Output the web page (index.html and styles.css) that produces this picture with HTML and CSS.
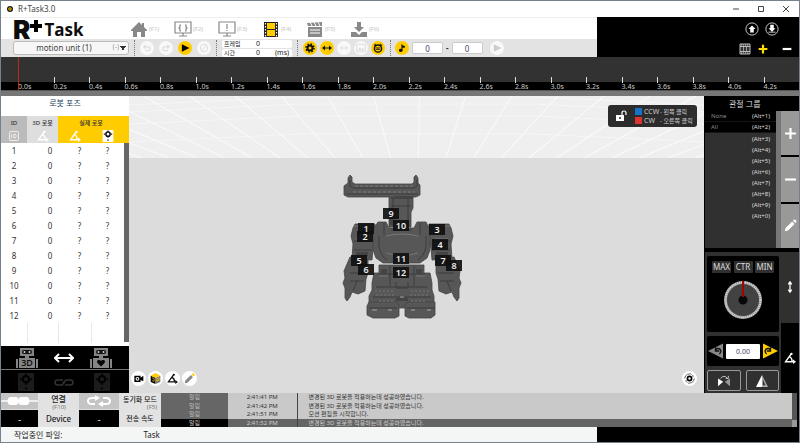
FILE: index.html
```html
<!DOCTYPE html>
<html lang="ko">
<head>
<meta charset="utf-8">
<title>R+Task3.0</title>
<link rel="stylesheet" href="styles.css">
</head>
<body>
<svg class="defs" aria-hidden="true">
  <symbol id="undo" viewBox="0 0 16 16"><path d="M3 6h7a3 3 0 0 1 0 6H5M6 3 3 6l3 3" fill="none" stroke="currentColor" stroke-width="2"/></symbol>
  <symbol id="angle" viewBox="0 0 16 16"><path d="M10 2 2 13h11M7 6q4 2 4 7" fill="none" stroke="currentColor" stroke-width="1.800"/><circle cx="10" cy="2.500" r="1.500" fill="currentColor"/><path d="m12 10 4 3-4 3z" fill="currentColor"/></symbol>
  <symbol id="both" viewBox="0 0 20 12"><path d="M0 6l6-5v4h8V1l6 5-6 5V7H6v4z" fill="currentColor"/></symbol>
  <symbol id="gear" viewBox="0 0 20 20"><circle cx="10" cy="10" r="5" fill="none" stroke="currentColor" stroke-width="4"/><circle cx="10" cy="10" r="8" fill="none" stroke="currentColor" stroke-width="3" stroke-dasharray="3.140"/></symbol>
  <symbol id="pencil" viewBox="0 0 16 16"><path d="m1 15 1-4 8-8 3 3-8 8z M11 2l1-1q1-1 2 0l1 1q1 1 0 2l-1 1z" fill="currentColor"/></symbol>
  <symbol id="motor" viewBox="0 0 18 20"><rect width="18" height="20" rx="1" fill="var(--plate)"/><circle cx="9" cy="7" r="3.500" fill="none" stroke="currentColor" stroke-width="2.500"/><path d="M8 1h2v2H8zM8 11h2v2H8zM2 6h2v2H2zM14 6h2v2h-2zM8 16h2v2H8z" fill="currentColor"/></symbol>
  <symbol id="bot" viewBox="0 0 22 20"><path d="M4 0h14v8H4zM9 8h4v3H9zM3 10h16v10H3zM0 11h2v9H0zM20 11h2v9h-2z" fill="#858585"/><rect x="6" y="2" width="10" height="4" rx="2" fill="#111"/><circle cx="8.500" cy="4" r="1" fill="#ccc"/><circle cx="13.500" cy="4" r="1" fill="#ccc"/></symbol>
</svg>
<div class="app">
  <header class="titlebar">
    <svg class="app-icon" viewBox="0 0 12 12"><circle cx="6" cy="6" r="6" fill="#171717"/><circle cx="6" cy="6" r="2.500" fill="none" stroke="#fc0" stroke-width="2"/></svg>
    <span>R+Task3.0</span>
    <div class="window-buttons">
      <button aria-label="최소화"><svg viewBox="0 0 8 8"><path d="M1 4h6"/></svg></button>
      <button aria-label="최대화"><svg viewBox="0 0 8 8"><path d="M1.500 1.500h5v5h-5z"/></svg></button>
      <button aria-label="닫기"><svg viewBox="0 0 8 8"><path d="m1 1 6 6M7 1 1 7"/></svg></button>
    </div>
  </header>

  <div class="top">
    <div class="top-main">
      <nav class="nav">
        <div class="logo"><span class="logo-r">R</span><svg viewBox="0 0 12 12"><path d="M4 0h4v4h4v4H8v4H4V8H0V4h4z"/></svg><span class="logo-task">Task</span></div>
        <button><svg viewBox="0 0 18 16"><path d="M9 1 1 9v1h2v6h4v-5h4v5h4v-6h2V9l-3-3V2h-2v2z" fill="#888"/></svg><span>(F1)</span></button>
        <button><svg viewBox="0 0 18 16"><path d="M1 1h16v11H1zM9 12v3M5 15h8M7 4H6v2L5 7l1 1v2h1M11 4h1v2l1 1-1 1v2h-1" fill="none" stroke="#888" stroke-width="1.200"/></svg><span>(F2)</span></button>
        <button><svg viewBox="0 0 18 16"><path d="M1 1h16v11H1zM9 12v3M5 15h8M9 3v5M9 9v1" fill="none" stroke="#888" stroke-width="1.200"/></svg><span>(F3)</span></button>
        <button><svg viewBox="0 0 18 16"><path d="M2 1h14v15H2z" fill="#222"/><path d="M5 2h8v6H5zM5 9h8v6H5z" fill="#fc0"/><path d="M3.500 2v14M14.500 2v14" stroke="#fff" stroke-width="1.200" stroke-dasharray="1.500"/></svg><span>(F4)</span></button>
        <button><svg viewBox="0 0 18 16"><path d="M2 6h14v10H2zM1 2l15-1v4H2z" fill="#888"/><path d="m4 1 2 4m2-4 2 4m2-4 2 4M4 9h10M4 12h10" stroke="#fff" fill="none"/></svg><span>(F5)</span></button>
        <button><svg viewBox="0 0 18 16"><path d="M7 1h4v5h3l-5 5-5-5h3zM1 11h5l3 3 3-3h5v5H1z" fill="#888"/></svg><span>(F6)</span></button>
      </nav>
      <div class="toolbar">
        <div class="unit-box"><select class="unit" aria-label="모션 유닛"><option>motion unit (1)</option></select><span>(-)</span></div>
        <i class="dots"></i>
        <div class="tools">
          <button class="round off" aria-label="실행 취소"><svg><use href="#undo"/></svg></button>
          <button class="round off" aria-label="다시 실행"><svg class="flip"><use href="#undo"/></svg></button>
          <button class="round" aria-label="재생"><svg viewBox="0 0 16 16"><path d="m3 2 12 6-12 6z" fill="#000"/></svg></button>
          <button class="round off" aria-label="정지"><svg viewBox="0 0 16 16"><circle cx="8" cy="8" r="6" fill="none" stroke="currentColor" stroke-width="1.500"/><path d="m4 12 8-8" stroke="currentColor" stroke-width="1.500"/></svg></button>
        </div>
        <i class="dots"></i>
        <dl class="frame"><div><dt>프레임</dt><dd>0</dd></div><div><dt>시간</dt><dd>0</dd><dd>(ms)</dd></div></dl>
        <i class="dots"></i>
        <div class="tools tight">
          <button class="round" aria-label="설정"><svg><use href="#gear"/></svg></button>
          <button class="round" aria-label="맞춤"><svg><use href="#both"/></svg></button>
          <button class="round off" aria-label="간격"><svg viewBox="0 0 20 12"><path d="M0 6h7M13 6h7M5 2l4 4-4 4M15 2l-4 4 4 4" fill="none" stroke="currentColor" stroke-width="2"/></svg></button>
          <button class="round off" aria-label="그림"><svg viewBox="0 0 16 16"><path d="M1 2h14v12H1z" fill="none" stroke="currentColor" stroke-width="1.500"/><path d="m2 12 4-5 3 3 2-2 3 4z" fill="currentColor"/></svg></button>
          <button class="round" aria-label="로봇"><svg viewBox="0 0 18 18"><circle cx="9" cy="10" r="6.500" fill="none" stroke="#111" stroke-width="2.500"/><path d="M5 8h8v4H5zM1 4l4-3v5zM17 4l-4-3v5z" fill="#111"/><path d="M6 10h2M10 10h2" stroke="#fc0" stroke-width="2"/></svg></button>
        </div>
        <i class="dots"></i>
        <div class="range">
          <button class="round" aria-label="음악"><svg viewBox="0 0 16 16"><path d="M7 1q1 3 6 4l-1 3-3-1v5a3 2.500 0 1 1-2-2.500z" fill="#111"/></svg></button>
          <input class="num" aria-label="시작" value="0"><b>-</b><input class="num" aria-label="끝" value="0">
          <button class="round off" aria-label="구간 재생"><svg viewBox="0 0 16 16"><path d="m3 2 12 6-12 6z" fill="#ccc"/></svg></button>
        </div>
      </div>
    </div>
    <div class="top-side">
      <div class="side-row">
        <button aria-label="올리기"><svg viewBox="0 0 16 16"><circle cx="8" cy="8" r="7" fill="none" stroke="#ddd"/><path d="m8 4 4 4h-2v4H6V8H4z" fill="#fff"/></svg></button>
        <button aria-label="내리기"><svg viewBox="0 0 16 16"><circle cx="8" cy="8" r="7" fill="none" stroke="#ddd"/><path d="M6 3h4v4h2l-4 4-4-4h2zM4 11h8v1H4z" fill="#fff"/></svg></button>
      </div>
      <div class="side-row second">
        <button aria-label="필름"><svg class="film" viewBox="0 0 12 12"><path d="M1 1h10v10H1z" fill="#333" stroke="#bbb"/><path d="M1 3.500h10M1 8.500h10" stroke="#bbb"/><path d="M2 2h8M2 10h8" stroke="#ccc" stroke-dasharray="1"/><path d="M4.500 4v4M7.500 4v4" stroke="#999"/></svg></button>
        <button aria-label="추가"><svg viewBox="0 0 16 16"><path d="M8 3v10M3 8h10" stroke="#fd0" stroke-width="2.500"/></svg></button>
        <button aria-label="삭제"><svg viewBox="0 0 16 16"><path d="M3 8h10" stroke="#fff" stroke-width="2.500"/></svg></button>
      </div>
    </div>
  </div>

  <div class="timeline"><ol class="ticks" id="ticks"></ol></div>

  <main class="main">
    <section class="pose">
      <h2>로봇 포즈</h2>
      <div class="pose-body">
        <table>
          <colgroup><col class="c-id"><col class="c-3d"><col><col></colgroup>
          <thead>
            <tr><th class="h-id">ID</th><th class="h-3d">3D 로봇</th><th class="h-real" colspan="2">실제 로봇</th></tr>
            <tr class="icons"><td class="h-id"><svg viewBox="0 0 16 16"><rect x="2" y="2" width="12" height="12" rx="2" fill="none" stroke="#fff"/><path d="M5 5v6M8 5v6M8 5.500h1q2 0 2 2.500t-2 2.500H8" fill="none" stroke="#fff"/></svg></td><td class="h-3d"><svg><use href="#angle"/></svg></td><td class="h-real"><svg><use href="#angle"/></svg></td><td class="h-real"><svg class="motor"><use href="#motor"/></svg></td></tr>
          </thead>
          <tbody id="joints"></tbody>
          <tfoot><tr><td></td><td></td><td></td><td></td></tr></tfoot>
        </table>
      </div>
      <div class="robots">
        <div class="bot"><svg><use href="#bot"/></svg><b>3D</b></div>
        <svg class="link-arrow" viewBox="0 0 20 10"><path d="M1 5h18M5 1 1 5l4 4M15 1l4 4-4 4" fill="none" stroke="#fff" stroke-width="2"/></svg>
        <div class="bot"><svg viewBox="0 0 22 20"><use href="#bot" width="22" height="20"/><path d="m11 18.500-3.500-3.500q-1.500-3 1.500-3 1.500 0 2 1 .5-1 2-1 3 0 1.500 3z" fill="#050505"/></svg></div>
      </div>
      <div class="robots dim">
        <svg><use href="#motor"/></svg>
        <svg viewBox="0 0 20 10"><path d="M9 3H4q-3 0-3 2.500T4 8h4l3-3M11 8h5q3 0 3-2.500T16 3h-4L9 6" fill="none" stroke="#333" stroke-width="1.500"/></svg>
        <svg><use href="#motor"/></svg>
      </div>
    </section>

    <section class="viewport">
      <svg class="backdrop" viewBox="0 0 574 62" preserveAspectRatio="none"><g id="rays" stroke="#fafafa" fill="none"></g></svg>
      <svg class="robot" viewBox="340 172 124 148">
        <g fill="#575757" stroke="#444" stroke-width=".8">
          <path d="M389 196h24v12l-2 4v15h-22z"/>
          <path d="M348 183v-5l2-3 2 2v5l3 2h57l2-2v-5l2-2 2 3v5l2 2v10l-4 2h-68l-4-2v-9z"/>
          <path d="M355 224h20l1 14-3 10-1 12-20-1 1-15-2-8 2-8z"/><path d="M449 224h-20l-1 14 3 10 1 12 20-1-1-15 2-8-2-8z"/>
          <path d="m350 257 18 2v14l-2 6-1 12-7 3-6-2-2 5-3 4-2-3v-10l-2-5 2-5-1-7z"/><path d="m454 257-18 2v14l2 6 1 12 7 3 6-2 2 5 3 4 2-3v-10l2-5-2-5 1-7z"/>
          <path d="M378 222h8l3 6h25l3-6h9l4 8v20l-3 8-7 5h-37l-7-5-3-8v-20z"/>
          <path d="M379 265h45v8h6l2 10v7l2 6v10l-6 2h-54l-5-3v-9l3-6v-7l2-10h5z"/>
          <path d="M369 302h28l2 3v11l-4 2h-22l-6-3v-9zM435 302h-28l-2 3v11l4 2h22l4-3v-9z"/>
        </g>
        <g fill="none" stroke="#3c3c3c">
          <path d="M350 180v6l3 2h61l3-2v-6M346 194h72"/><path d="M355 186h58M353 192h62" stroke="#7d7d7d" stroke-dasharray="3 2"/>
          <path d="M391 198h20M391 206h20M408 198v27M393 198v28"/>
          <path d="M384 223v12M420 223v12M391 230h21M379 236v10q1 9 8 14M426 236v10q-1 9-8 14"/>
          <path d="M354 241h18M432 241h18M354 250h18M432 250h18M350 273h16M438 273h16M350 281h14M440 281h14M353 291l4-10M451 291l-4-10"/>
          <path d="M378 274h47M376 287h51M390 266v20M414 266v20M396 282v6h12v-6M373 297h58M369 308h28M407 308h28"/>
        </g>
        <g fill="#444">
          <path d="M395 196h18v3h-18zM389 209h4v16h-4zM356 252h12v4h-12zM436 252h12v4h-12zM381 269h6v5h-6zM416 269h6v5h-6zM396 298h12v3h-12z"/>
        </g>
        <g fill="none" stroke="#858585" stroke-width=".7">
          <path d="M386 236q16-4 32 0M386 253q16 5 32 0M356 239h13M435 239h13M379 276h9M416 276h9M354 226h18M432 226h18"/>
          <path d="M375 291h19M411 291h19M379 301h14M411 301h14M376 295h18M410 295h18" stroke-dasharray="2 2"/>
          <path d="M372 310h5M388 310h4M411 310h4M427 310h4M400 297h4" stroke="#ccc"/>
        </g>
        <g id="labels" class="joint-labels"></g>
      </svg>
      <div class="legend">
        <svg viewBox="0 0 12 12"><path d="M1 5h8v6H1z" fill="#fff"/><path d="M7 5V3q0-2 2-2t2 2v2" fill="none" stroke="#fff" stroke-width="1.200"/><circle cx="5" cy="8" r="1" fill="#222"/></svg>
        <ul><li><i></i><span>CCW</span><em>- 왼쪽 클릭</em></li><li><i class="red"></i><span>CW</span><em>- 오른쪽 클릭</em></li></ul>
      </div>
      <div class="view-tools">
        <button aria-label="카메라"><svg viewBox="0 0 16 16"><path d="M2 4h9v9H2zM11 7l4-3v8l-4-2z"/><circle cx="6.500" cy="8.500" r="2" fill="none" stroke="#fff" stroke-width="1.500"/></svg></button>
        <button aria-label="큐브"><svg viewBox="0 0 16 16"><path d="M1 4l7 3v9l-7-3z"/><path d="M15 4 8 7v9l7-3z" fill="#777"/><path d="m8 0 7 4-7 3-7-3z" fill="#fc0"/><path d="M3 7l3 1v4l-3-1M10 8l3-1v4l-3 1z" fill="none" stroke="#fc0"/></svg></button>
        <button aria-label="각도"><svg><use href="#angle"/></svg></button>
        <button aria-label="편집"><svg viewBox="0 0 16 16"><path d="m1 15 1-4 8-8 3 3-8 8z" fill="#888"/><path d="m11 2 2-2 3 3-2 2z" fill="#fc0"/></svg></button>
      </div>
      <button class="orbit" aria-label="회전"><svg viewBox="0 0 16 16"><circle cx="8" cy="8" r="3" fill="none" stroke="#000" stroke-width="2.500"/><path d="M1 8q0-4 4-6l5-1M15 8q0 4-4 6l-5 1M3 10v2l2 2M13 6V4l-2-2" fill="none" stroke="#222"/></svg></button>
    </section>

    <aside class="side">
      <h2>관절 그룹</h2>
      <div class="groups">
        <ul id="groups"></ul>
        <i class="bar"></i>
        <div class="group-buttons">
          <button aria-label="그룹 추가"><svg viewBox="0 0 12 12"><path d="M6 1v10M1 6h10" stroke="#fff" stroke-width="2"/></svg></button>
          <button aria-label="그룹 삭제"><svg viewBox="0 0 12 12"><path d="M1 6h10" stroke="#fff" stroke-width="2"/></svg></button>
          <button aria-label="그룹 편집"><svg><use href="#pencil"/></svg></button>
        </div>
      </div>
      <div class="control">
        <div class="control-main">
          <div class="box">
            <div class="presets"><button>MAX</button><button>CTR</button><button>MIN</button></div>
            <svg class="knob" viewBox="0 0 40 40"><circle cx="20" cy="20" r="19" fill="#999"/><circle cx="20" cy="20" r="17.500" fill="none" stroke="#ddd" stroke-width="2" stroke-dasharray="1 1"/><circle cx="20" cy="20" r="16" fill="#424242"/><circle cx="20" cy="20" r="4.500" fill="#080808"/><path d="M20 1v16" stroke="#a00" stroke-width="2"/></svg>
          </div>
          <div class="box turn">
            <button aria-label="왼쪽 회전"><svg viewBox="0 0 16 16"><path d="M0 8 16 0v16z" fill="#888"/><path d="M8 7a3 3 0 1 1 4 4M8 4v4h4" fill="none" stroke="#111" stroke-width="1.500"/></svg></button>
            <input aria-label="각도 값" value="0.00">
            <button aria-label="오른쪽 회전"><svg viewBox="0 0 16 16"><path d="M16 8 0 0v16z" fill="#fc0"/><path d="M8 7a3 3 0 1 0-4 4M8 4v4H4" fill="none" stroke="#111" stroke-width="1.500"/></svg></button>
          </div>
          <div class="mirror">
            <button aria-label="대칭 교환"><svg viewBox="0 0 16 14"><path d="m1 4 6 4-6 5z" fill="#fff"/><path d="m15 4-6 4 6 5z" fill="#999"/><path d="M4 4q4-5 8 0M10 4h3V1" fill="none" stroke="#ddd"/></svg></button>
            <button aria-label="대칭 복사"><svg viewBox="0 0 16 14"><path d="M8 0v14H1z" fill="#fff"/><path d="M8 0v14h7z" fill="#aaa"/><path d="M9 5v7h3z" fill="#333"/></svg></button>
          </div>
        </div>
        <div class="tabs">
          <button class="on" aria-label="이동"><svg viewBox="0 0 8 14"><path d="M4 2v10M2 4l2-3 2 3M2 10l2 3 2-3" fill="none" stroke="#fff" stroke-width="1.500"/></svg></button>
          <button aria-label="관절 각도"><svg><use href="#angle"/></svg></button>
        </div>
      </div>
    </aside>
  </main>

  <section class="bottom">
    <div class="connection">
      <div class="pic"><svg viewBox="0 0 38 12" preserveAspectRatio="none"><path d="M0 6h38" stroke="#eee" stroke-width="2"/><rect x="7" y="2" width="11" height="8" rx="3" fill="#fff"/><rect x="18" y="2" width="11" height="8" rx="3" fill="#fff"/></svg></div>
      <button class="keyed">연결<small>(F10)</small></button>
      <div class="pic"><svg viewBox="0 0 38 12"><path d="M18 3H12q-4 0-4 3t4 3h3M20 9h6q4 0 4-3t-4-3h-3" fill="none" stroke="#fff" stroke-width="2"/><path d="m15 0 5 3-5 3zM23 6l-5 3 5 3z" fill="#fff"/></svg></div>
      <button class="keyed small">동기화 모드<small>(F5)</small></button>
      <div class="value">-</div><button>Device</button><div class="value">-</div><button class="small">전송 속도</button>
    </div>
    <table class="log">
      <colgroup><col class="l-kind"><col class="l-time"><col></colgroup>
      <tbody>
        <tr><td>알림</td><td>2:41:41 PM</td><td>변경된 3D 로봇을 적용하는데 성공하였습니다.</td></tr>
        <tr><td>알림</td><td>2:41:42 PM</td><td>변경된 3D 로봇을 적용하는데 성공하였습니다.</td></tr>
        <tr><td>알림</td><td>2:41:51 PM</td><td>모션 편집을 시작합니다.</td></tr>
        <tr class="current"><td>알림</td><td>2:41:52 PM</td><td>변경된 3D 로봇을 적용하는데 성공하였습니다.</td></tr>
      </tbody>
    </table>
    <i class="log-bar"></i>
  </section>
  <footer class="status"><div><span>작업중인 파일:</span><span>Task</span></div></footer>
</div>
<script src="app.js"></script>
</body>
</html>
```
FILE: styles.css
```css
* { box-sizing: border-box; }
body { margin: 0; font: 8px/1 "Noto Sans", "Noto Sans CJK KR", sans-serif; color: #333; }
button { border: 0; padding: 0; margin: 0; background: none; font: inherit; color: inherit; display: flex; align-items: center; justify-content: center; }
input, select { font: inherit; min-width: 0; }
h2, ul, ol, dl, dd { margin: 0; padding: 0; list-style: none; font-weight: 400; }
svg { display: block; flex: none; }
.defs { width: 0; height: 0; position: absolute; }
.app { min-height: 100vh; border: 1px solid #75818c; display: grid; grid-template-rows: 16px 40px 39px 1fr 34px 15px; background: #fff; }

.titlebar { display: flex; align-items: center; gap: 5px; padding-left: 6px; color: #444; }
.app-icon { width: 6px; height: 6px; }
.window-buttons { margin-left: auto; display: flex; gap: 17px; padding-right: 9px; }
.window-buttons svg { width: 8px; height: 8px; fill: none; stroke: #444; }

.top { display: grid; grid-template-columns: 1fr 202px; background: #000; }
.top-main { display: grid; grid-template-rows: 22px 18px; background: #fff; min-width: 0; }
.nav { display: flex; align-items: center; border-top: 1px solid #eee; }
.logo { width: 129px; padding-left: 12px; display: flex; color: #0d0d0d; height: 20px; }
.logo-r { font: 900 26px/22px Inter, sans-serif; }
.logo svg { width: 12px; height: 12px; margin-top: 1px; }
.logo-task { font: 700 17px/22px "Open Sans", sans-serif; margin-left: 2px; }
.nav button { width: 44px; justify-content: flex-start; gap: 1px; font-size: 6px; color: #c4c4c4; }
.nav button svg { width: 18px; height: 16px; }
.toolbar { background: #e3e3e3; display: flex; align-items: center; padding-left: 12px; gap: 5px; }
.unit-box { width: 116px; position: relative; }
.unit-box span { position: absolute; right: 10px; top: 2px; font-size: 7px; color: #999; }
.unit { display: block; width: 100%; height: 14px; border: 1px solid #bbb; border-radius: 3px; appearance: none; padding: 0 26px 0 12px; text-align: center; color: #444; background: conic-gradient(from -30deg at 50% 100%, #333 0 60deg, #f7f7f7 0) right 2px center / 6px 5px no-repeat, #f7f7f7; }
.dots { border-left: 1px dotted #777; height: 16px; width: 1px; }
.tools { display: flex; gap: 5px; }
.tight, .range { gap: 3px; }
.range { display: flex; align-items: center; margin-left: -1px; }
.range .off { margin-left: 4px; }
.round { width: 14px; height: 14px; border-radius: 50%; background: #fc0; color: #111; flex: none; }
.round svg { width: 10px; height: 10px; }
.round.off { background: #f8f8f8; color: #ddd; }
.flip { transform: scaleX(-1); }
.frame { width: 70px; font-size: 7px; line-height: 8px; display: grid; gap: 1px; color: #222; }
.frame dt { font-size: 6px; }
.frame div { height: 8px; background: #fff; border-radius: 2px; display: grid; grid-template-columns: 32px 1fr 17px; padding-left: 2px; }
.num { width: 31px; height: 12px; border: 1px solid #ccc; border-radius: 2px; text-align: center; color: #446; padding: 0; background: #fff; }
.top-side { display: grid; grid-template-rows: 24px 16px; }
.side-row { display: flex; justify-content: flex-end; align-items: center; gap: 6px; padding-right: 20px; }
.side-row svg { width: 14px; height: 14px; }
.second { padding-right: 5px; gap: 5px; }
.second .film { width: 12px; height: 12px; }
.second button:last-child { margin-left: 5px; }

.timeline { background: linear-gradient(#323232 0 25px, #000 0 33px, #555 0 34px, #777 0); padding-left: 17px; min-width: 0; }
.ticks { display: grid; grid-template-columns: repeat(22, 1fr); height: 33px; padding-top: 20px; color: #ccc; font-size: 7px; position: relative; }
.ticks::before { content: ""; position: absolute; left: 0; top: 0; height: 33px; width: 1px; background: #b42c12; }
.ticks li { min-width: 0; }
.ticks li::before { content: ""; display: block; width: 1px; height: 6px; background: #ddd; }

.main { display: grid; grid-template-columns: 128px 1fr 95px; background: #000; min-height: 0; }
.pose { display: grid; grid-template-rows: 20px 1fr 24px 23px; background: #fff; }
.pose h2 { text-align: center; font-size: 8px; line-height: 14px; color: #246; }
.pose-body { background: linear-gradient(#fc0 0 27px, #666 0 226px, #fff 0) right / 6px 100% no-repeat; padding-right: 5px; display: grid; }
.pose table { border-collapse: collapse; table-layout: fixed; width: 100%; text-align: center; background: #fff; align-self: start; }
.c-id { width: 26px; }
.c-3d { width: 31px; }
.pose th, .pose td { padding: 0; height: 15px; }
.pose th { height: 13px; font-size: 6px; font-weight: 500; }
.icons td { height: 14px; }
.pose td svg { width: 12px; height: 12px; margin: 0 auto; color: #fff; }
.pose td .motor { --plate: #fff; color: #111; }
.h-id { background: #bbb; }
.h-3d { background: #dedede; }
.h-real { background: #fc0; }
.pose tbody td:nth-child(2) { padding-left: 15px; }
.pose tbody td:nth-child(3) { padding-left: 10px; }
.pose tfoot td { height: 20px; }
.pose tfoot td + td { border-left: 1px solid #e8e8e8; }
.robots { background: #000; display: flex; justify-content: space-between; align-items: center; padding: 0 17px 0 15px; border-bottom: 1px solid #777; }
.bot { position: relative; }
.bot svg { width: 22px; height: 20px; }
.bot b { position: absolute; inset: 10px 0 auto; text-align: center; font: 600 9px/10px "Noto Sans", sans-serif; color: #111; }
.link-arrow { width: 20px; height: 10px; }
.dim { border: 0; color: #000; --plate: #1c1c1c; }
.dim svg { width: 20px; height: 18px; }

.viewport { position: relative; background: #dcdcdc; overflow: hidden; min-width: 0; }
.backdrop { width: 100%; height: 62px; background: #efefef; }
.robot { position: absolute; left: 211px; top: 76px; width: 124px; height: 148px; }
.joint-labels rect { fill: #101010; opacity: .92; }
.joint-labels text { fill: #eee; font: 600 9px "Noto Sans", sans-serif; text-anchor: middle; }
.legend { position: absolute; right: 7px; top: 9px; width: 89px; height: 22px; background: #2c2c2c; border-radius: 3px; display: flex; align-items: center; gap: 8px; padding-left: 7px; color: #ccc; font-size: 7px; }
.legend svg { width: 12px; height: 12px; }
.legend ul { display: grid; gap: 2px; }
.legend li { display: flex; align-items: center; white-space: nowrap; }
.legend i { width: 7px; height: 7px; background: #1773c9; margin-right: 2px; }
.legend .red { background: #d33; }
.legend span { width: 16px; }
.legend em { font-style: normal; font-size: 6px; }
.view-tools { position: absolute; left: 2px; bottom: 7px; display: flex; gap: 2px; }
.view-tools button, .orbit { width: 15px; height: 15px; border-radius: 50%; background: #fff; color: #111; }
.view-tools svg, .orbit svg { width: 11px; height: 11px; }
.orbit { position: absolute; right: 7px; bottom: 7px; }

.side { display: grid; grid-template-rows: 15px 137px 1fr; background: #000; border-left: 1px solid #000; }
.side h2 { color: #ddd; font-size: 8px; line-height: 15px; padding-left: 24px; }
.groups { display: grid; grid-template-columns: 71px 5px 1fr; }
.groups ul { background: #303030; color: #ddd; font-size: 6px; }
.groups li { height: 11px; display: flex; align-items: center; justify-content: space-between; padding: 0 6px; }
.groups li:nth-child(-n+2) { background: #000; border-bottom: 1px solid #151515; }
.groups li span { color: #888; }
.bar { background: #777; }
.group-buttons { display: grid; grid-template-rows: repeat(3, 1fr); gap: 2px; }
.group-buttons button { background: #999; color: #fff; }
.group-buttons svg { width: 13px; height: 13px; }
.control { display: grid; grid-template-columns: 1fr 18px; padding-top: 4px; }
.control-main { background: #303030; padding: 4px 2px 2px; display: grid; grid-template-rows: 76px 30px 21px; gap: 4px; min-width: 0; }
.box { background: #000; border-radius: 2px; }
.presets { display: flex; justify-content: space-between; padding: 5px; }
.presets button { width: 19px; height: 12px; background: #303030; color: #ddd; border-radius: 1px; }
.knob { width: 40px; height: 40px; margin: 2px auto; }
.turn { display: flex; align-items: center; justify-content: space-between; padding: 0 1px; }
.turn svg { width: 15px; height: 16px; }
.turn input { width: 34px; height: 15px; border: 0; border-radius: 1px; text-align: center; padding: 0; color: #446; font-size: 7px; }
.mirror { display: grid; grid-template-columns: 1fr 1fr; gap: 5px; }
.mirror button { border: 1px solid #999; border-radius: 2px; }
.mirror svg { width: 16px; height: 12px; }
.tabs { display: grid; grid-template-rows: 1fr 1fr; }
.tabs button { color: #fff; }
.tabs .on { background: #303030; }
.tabs svg { width: 12px; height: 12px; }

.bottom { display: grid; grid-template-columns: 160px 1fr 5px; background: #c9c9c9; border-right: 2px solid #000; }
.connection { display: grid; grid-template-columns: 37px 41px 40px 42px; grid-template-rows: 17px 17px; }
.connection button { background: #e2e2e2; color: #222; font-size: 8px; font-weight: 500; }
.connection .small { font-size: 7px; white-space: nowrap; }
.connection .keyed { display: grid; grid-template-rows: 10px 7px; align-items: end; }
.connection small { justify-self: end; font-size: 6px; line-height: 6px; font-weight: 400; color: #777; }
.pic { background: #c4c4c4; display: flex; align-items: center; justify-content: center; border-bottom: 1px solid #ddd; }
.pic svg { width: 100%; height: 12px; }
.value { background: #000; color: #ddd; display: flex; align-items: center; justify-content: center; font-size: 10px; }
.log { border-collapse: collapse; table-layout: fixed; width: 100%; height: 34px; font-size: 6px; line-height: 8px; color: #333; }
.log td { padding: 0 0 0 11px; white-space: nowrap; }
.l-kind { width: 67px; }
.l-time { width: 69px; }
.log td:first-child { background: #666; color: #bbb; text-align: center; padding: 0; }
.log td:nth-child(2) { text-align: center; padding: 0; border-right: 1px solid #444; }
.log .current td { background: #646464; color: #ccc; }
.log .current td:first-child { background: #000; }
.log-bar { background: linear-gradient(#555 0 27px, #999 0); }
.status { display: grid; grid-template-columns: 1fr 202px; background: #000; color: #222; font-size: 8px; }
.status div { background: #f4f5f5; display: flex; align-items: center; padding-left: 13px; gap: 81px; }
```
FILE: app.js
```javascript
const byId = id => document.getElementById(id);

byId('ticks').innerHTML = Array.from({ length: 22 }, (_, i) => `<li>${(i * 0.2).toFixed(1)}s</li>`).join('');

byId('joints').innerHTML = Array.from({ length: 12 }, (_, i) =>
  `<tr><td>${i + 1}</td><td>0</td><td>?</td><td>?</td></tr>`).join('');

const groupNames = ['None', 'All'];
byId('groups').innerHTML = Array.from({ length: 10 }, (_, i) =>
  `<li><span>${groupNames[i] || ''}</span>(Alt+${(i + 1) % 10})</li>`).join('');

// Joint label centres on the robot canvas, in ID order.
const centres = [[366, 228], [365, 236], [437, 229], [440, 244], [359, 260], [366, 269],
  [443, 260], [454, 265], [391, 213], [401, 225], [401, 258], [401, 272]];
byId('labels').innerHTML =
  centres.map(([x, y]) => `<rect x="${x - 8}" y="${y - 5}" width="16" height="11"/>`).join('') +
  centres.map(([x, y], i) => `<text x="${x}" y="${y + 4}">${i + 1}</text>`).join('');

// Perspective grid behind the robot.
let rays = '';
for (let x = -400; x <= 980; x += 46) {
  rays += `<path d="M${x} 0L${287 + (x - 287) * 0.6} 62"/>`;
}
for (const y of [1, 8, 20, 38]) {
  rays += `<path d="M0 ${y + 8}L170 ${y}H404L574 ${y + 8}" stroke-opacity=".6"/>`;
}
byId('rays').innerHTML = rays;
```
